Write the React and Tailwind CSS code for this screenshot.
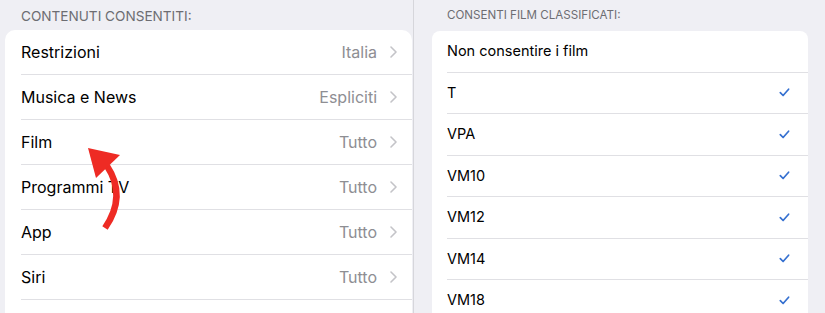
import React from "react";

const leftRows = [
  ["Restrizioni", "Italia"],
  ["Musica e News", "Espliciti"],
  ["Film", "Tutto"],
  ["Programmi TV", "Tutto"],
  ["App", "Tutto"],
  ["Siri", "Tutto"],
];

const rightRows = [
  ["Non consentire i film", false],
  ["T", true],
  ["VPA", true],
  ["VM10", true],
  ["VM12", true],
  ["VM14", true],
  ["VM18", true],
];

function Chevron() {
  return (
    <svg width="7" height="12" viewBox="0 0 7 12" className="ml-[13px] shrink-0">
      <path d="M1 1l5 5-5 5" fill="none" stroke="#c4c4c8" strokeWidth="1.6" strokeLinecap="round" strokeLinejoin="round" />
    </svg>
  );
}

function Check() {
  return (
    <svg width="11" height="9" viewBox="0 0 11 9" className="shrink-0">
      <path d="M1.3 4.6l2.8 2.9L9.6 1.2" fill="none" stroke="#3570d0" strokeWidth="1.7" strokeLinecap="round" strokeLinejoin="round" />
    </svg>
  );
}

export default function App() {
  return (
    <div
      className="relative flex h-[313px] w-[825px] overflow-hidden bg-[#efeff4] text-black"
      style={{ fontFamily: "Inter, 'Liberation Sans', sans-serif" }}
    >
      {/* Left panel */}
      <div className="flex w-[414px] shrink-0 flex-col border-r border-[#d6d6db] pl-[5px] pr-[1px]">
        <div className="flex h-[30px] shrink-0 items-center pl-[16px] pt-[3px] text-[13.6px] text-[#6d6d72]">
          CONTENUTI CONSENTITI:
        </div>
        <div className="flex-1 rounded-t-[10px] bg-white">
          {leftRows.map(([label, value]) => (
            <div
              key={label}
              className="ml-[16px] flex h-[45px] items-center border-b border-[#e0e0e4] pr-[15px] text-[16px]"
            >
              <span className="flex-1">{label}</span>
              <span className="text-[#8e8e93]">{value}</span>
              <Chevron />
            </div>
          ))}
        </div>
      </div>

      {/* Right panel */}
      <div className="flex flex-1 flex-col pl-[18px] pr-[17px]">
        <div className="flex h-[31px] shrink-0 items-center pl-[15px] pt-[1px] text-[11.6px] text-[#6d6d72]">
          CONSENTI FILM CLASSIFICATI:
        </div>
        <div className="flex-1 rounded-t-[8px] bg-white">
          {rightRows.map(([label, checked]) => (
            <div
              key={label}
              className="ml-[15px] flex h-[41.5px] items-center border-b border-[#e0e0e4] pr-[18px] text-[14.5px]"
            >
              <span className="flex-1">{label}</span>
              {checked && <Check />}
            </div>
          ))}
        </div>
      </div>

      {/* Red annotation arrow */}
      <svg
        className="pointer-events-none absolute left-0 top-0"
        width="825"
        height="313"
        viewBox="0 0 825 313"
      >
        <path d="M105 228 Q127 196 107 166" fill="none" stroke="#ee2b24" strokeWidth="6.5" strokeLinecap="butt" />
        <polygon points="88,148 120,155 96,178" fill="#ee2b24" />
      </svg>
    </div>
  );
}
